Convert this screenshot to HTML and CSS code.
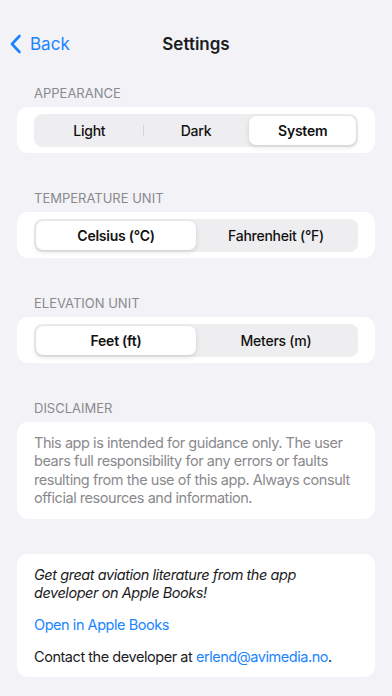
FILE: index.html
```html
<!DOCTYPE html>
<html lang="en">
<head>
  <meta charset="utf-8">
  <title>Settings</title>
  <link rel="stylesheet" href="styles.css">
</head>
<body>
  <div class="nav">
    <a class="nav-back" href="#">
      <svg class="nav-chevron" width="13" height="20" viewBox="0 0 13 20"><path d="M10.5 2 L3 10 L10.5 18" fill="none" stroke="currentColor" stroke-width="2.6" stroke-linecap="round" stroke-linejoin="round"/></svg>
      <span>Back</span>
    </a>
    <h1 class="nav-title">Settings</h1>
  </div>

  <div class="section">
    <p class="section-label">Appearance</p>
    <div class="card card-control">
      <div class="segmented">
        <span class="seg">Light</span>
        <span class="seg seg-divided">Dark</span>
        <span class="seg is-active">System</span>
      </div>
    </div>
  </div>

  <div class="section">
    <p class="section-label">Temperature Unit</p>
    <div class="card card-control">
      <div class="segmented">
        <span class="seg is-active">Celsius (°C)</span>
        <span class="seg">Fahrenheit (°F)</span>
      </div>
    </div>
  </div>

  <div class="section">
    <p class="section-label">Elevation Unit</p>
    <div class="card card-control">
      <div class="segmented">
        <span class="seg is-active">Feet (ft)</span>
        <span class="seg">Meters (m)</span>
      </div>
    </div>
  </div>

  <div class="section">
    <p class="section-label">Disclaimer</p>
    <div class="card card-text">
      <p class="disclaimer">This app is intended for guidance only. The user bears full responsibility for any errors or faults resulting from the use of this app. Always consult official resources and information.</p>
    </div>
  </div>

  <div class="section section-last">
    <div class="card card-text">
      <p class="promo">Get great aviation literature from the app developer on Apple Books!</p>
      <p class="info"><a class="link" href="#">Open in Apple Books</a></p>
      <p class="info">Contact the developer at <a class="link" href="#">erlend@avimedia.no</a>.</p>
    </div>
  </div>
</body>
</html>
```

FILE: styles.css
```css
body {
  margin: 0;
  background: #f2f2f7;
  font-family: "Inter", "Liberation Sans", sans-serif;
  color: #1c1c1e;
}

p { margin: 0; }

.nav {
  position: relative;
  height: 48px;
  margin-top: 20px;
  display: flex;
  align-items: center;
  justify-content: center;
}

.nav-back {
  position: absolute;
  left: 9px;
  top: 0;
  height: 48px;
  display: flex;
  align-items: center;
  gap: 8px;
  color: #1a84ff;
  text-decoration: none;
  font-size: 17px;
}

.nav-title {
  margin: 0;
  font-size: 17px;
  font-weight: 600;
}

.section { margin-top: 17px; }
.section + .section { margin-top: 37px; }
.section + .section-last { margin-top: 35px; }

.section-label {
  margin-left: 34px;
  margin-bottom: 6px;
  font-size: 13px;
  line-height: 16px;
  text-transform: uppercase;
  color: #8a8a8e;
}

.card {
  margin: 0 17px;
  background: #fff;
  border-radius: 11px;
}

.card-control { padding: 7px 17px 6px; }

.segmented {
  display: flex;
  height: 33px;
  padding: 2px;
  box-sizing: border-box;
  background: #eeeef0;
  border-radius: 8px;
}

.seg {
  position: relative;
  flex: 1;
  display: flex;
  align-items: center;
  justify-content: center;
  font-size: 14px;
  font-weight: 500;
  letter-spacing: -0.25px;
  color: #111;
  border-radius: 7px;
}

.seg.is-active {
  background: #fff;
  font-weight: 600;
  box-shadow: 0 2px 5px rgba(0, 0, 0, 0.12), 0 0 1px rgba(0, 0, 0, 0.08);
}

.seg-divided::before {
  content: "";
  position: absolute;
  left: 0;
  top: 9px;
  bottom: 9px;
  width: 1px;
  background: #d6d6da;
}

.card-text {
  padding: 12px 17px 11px;
  font-size: 14.5px;
  letter-spacing: -0.45px;
}

.disclaimer {
  line-height: 18.4px;
  color: #8a8a8e;
}

.promo {
  line-height: 18px;
  font-style: italic;
}

.info {
  margin-top: 14px;
  line-height: 18px;
}

.link {
  color: #1a84ff;
  text-decoration: none;
}
```
